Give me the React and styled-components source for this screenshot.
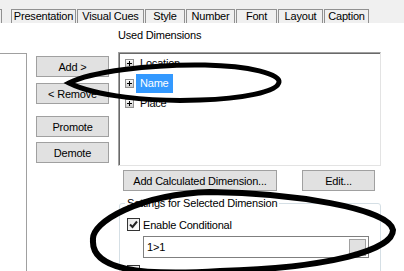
import React from "react";
import styled, { createGlobalStyle } from "styled-components";

const GlobalStyle = createGlobalStyle`
  html, body {
    margin: 0;
    padding: 0;
    background: #fff;
  }
  body {
    width: 404px;
    height: 271px;
    overflow: hidden;
    font-family: "Liberation Sans", Arial, sans-serif;
    font-size: 11px;
    letter-spacing: -0.2px;
    color: #000;
  }
`;

const Page = styled.div`
  position: relative;
  width: 404px;
  height: 271px;
  overflow: hidden;
  background: #fff;
`;

const TabStrip = styled.div`
  display: flex;
  align-items: flex-end;
  gap: 1px;
  box-sizing: border-box;
  height: 23px;
  padding-top: 9px;
  background: #f0f0f0;
`;

const Tab = styled.div`
  box-sizing: border-box;
  flex: none;
  width: ${(p) => p.$w}px;
  height: 14px;
  margin-right: ${(p) => p.$mr || 0}px;
  border: 1px solid #919191;
  border-bottom: none;
  border-left: ${(p) => (p.$cut ? "none" : "1px solid #919191")};
  background: #f0f0f0;
  line-height: 13px;
  text-align: center;
  white-space: nowrap;
`;

const Main = styled.div`
  display: flex;
  align-items: flex-start;
  height: 248px;
`;

const SideList = styled.div`
  box-sizing: border-box;
  flex: none;
  width: 27px;
  height: 230px;
  margin-top: 30px;
  border-top: 1px solid #a0a0a0;
  border-right: 1px solid #a0a0a0;
  background: #fff;
`;

const ButtonColumn = styled.div`
  display: flex;
  flex-direction: column;
  flex: none;
  width: 73px;
  margin: 33px 0 0 9px;
`;

const Button = styled.button`
  box-sizing: border-box;
  flex: none;
  width: ${(p) => p.$w || 73}px;
  height: 21px;
  margin: ${(p) => p.$mt || 0}px 0 0 ${(p) => p.$ml || 0}px;
  padding: 0;
  border: 1px solid #a0a0a0;
  background: #e1e1e1;
  font: 11px "Liberation Sans", Arial, sans-serif;
  letter-spacing: -0.2px;
  color: #000;
  text-align: center;
  white-space: nowrap;
`;

const RightColumn = styled.div`
  display: flex;
  flex-direction: column;
  flex: none;
  width: 263px;
  margin-left: 9px;
`;

const Caption = styled.div`
  margin-top: 6px;
  line-height: 13px;
  white-space: nowrap;
`;

const TreeList = styled.div`
  box-sizing: border-box;
  height: 114px;
  margin-top: 10px;
  border-top: 1px solid #a0a0a0;
  border-left: 1px solid #a0a0a0;
  border-right: 1px solid #e3e3e3;
  border-bottom: 1px solid #e3e3e3;
  box-shadow: inset 1px 1px 0 #696969;
  padding-left: 6px;
  background: #fff;
`;

const TreeRow = styled.div`
  display: flex;
  align-items: center;
  height: 20px;
`;

const TreeLabel = styled.span`
  display: flex;
  align-items: center;
  height: 19px;
  margin-left: 2px;
  padding: 0 4px;
  background: ${(p) => (p.$selected ? "#3399ff" : "transparent")};
  color: ${(p) => (p.$selected ? "#fff" : "#000")};
  white-space: nowrap;
`;

const ButtonRow = styled.div`
  display: flex;
  margin-top: 4px;
`;

const Group = styled.fieldset`
  box-sizing: border-box;
  height: 90px;
  margin: 6px 0 0 1px;
  padding: 8px 0 0 7px;
  border: 1px solid #d5dfe5;
  border-radius: 3px;
`;

const GroupTitle = styled.legend`
  margin-left: -2px;
  padding: 0 2px;
  line-height: 13px;
  white-space: nowrap;
`;

const CheckRow = styled.div`
  display: flex;
  align-items: center;
  gap: 3px;
  height: 13px;
  margin-top: ${(p) => p.$mt || 0}px;
  white-space: nowrap;
`;

const Box = styled.span`
  box-sizing: border-box;
  display: flex;
  align-items: center;
  justify-content: center;
  flex: none;
  width: 13px;
  height: 13px;
  border: 1px solid #333;
  background: linear-gradient(135deg, #e6e6e6, #fff);
`;

const Field = styled.div`
  box-sizing: border-box;
  display: flex;
  align-items: center;
  justify-content: space-between;
  width: 226px;
  height: 22px;
  margin: 5px 0 0 16px;
  padding: 0 2px 0 3px;
  border: 1px solid #7f7f7f;
  background: #fff;
`;

const DotsButton = styled.span`
  box-sizing: border-box;
  display: flex;
  align-items: flex-end;
  justify-content: center;
  width: 17px;
  height: 17px;
  border: 1px solid #a0a0a0;
  background: #e1e1e1;
  line-height: 11px;
  font-size: 10px;
`;

const Overlay = styled.svg`
  position: absolute;
  left: 0;
  top: 0;
  pointer-events: none;
`;

const tabs = [
  ["Presentation", 65],
  ["Visual Cues", 67],
  ["Style", 40],
  ["Number", 49],
  ["Font", 41],
  ["Layout", 45],
  ["Caption", 45],
];

const Expander = () => (
  <svg width="9" height="9" viewBox="0 0 9 9">
    <defs>
      <linearGradient id="exp" x1="0" y1="0" x2="0" y2="1">
        <stop offset="0" stopColor="#ffffff" />
        <stop offset="1" stopColor="#c8c8c8" />
      </linearGradient>
    </defs>
    <rect x="0.5" y="0.5" width="8" height="8" fill="url(#exp)" stroke="#919191" />
    <path d="M2 4.5h5M4.5 2v5" stroke="#000" strokeWidth="1" />
  </svg>
);

const CheckBox = ({ checked }) => (
  <Box>
    {checked && (
      <svg width="9" height="9" viewBox="0 0 9 9">
        <path d="M1 4.5 L3.5 7 L8 1.5" fill="none" stroke="#222" strokeWidth="2" />
      </svg>
    )}
  </Box>
);

export default function App() {
  return (
    <Page>
      <GlobalStyle />
      <TabStrip>
        <Tab $w={2} $mr={8} $cut />
        {tabs.map(([label, w]) => (
          <Tab key={label} $w={w}>
            {label}
          </Tab>
        ))}
      </TabStrip>
      <Main>
        <SideList />
        <ButtonColumn>
          <Button>Add &gt;</Button>
          <Button $mt={6}>&lt; Remove</Button>
          <Button $mt={12}>Promote</Button>
          <Button $mt={5}>Demote</Button>
        </ButtonColumn>
        <RightColumn>
          <Caption>Used Dimensions</Caption>
          <TreeList>
            <TreeRow>
              <Expander />
              <TreeLabel>Location</TreeLabel>
            </TreeRow>
            <TreeRow>
              <Expander />
              <TreeLabel $selected>Name</TreeLabel>
            </TreeRow>
            <TreeRow>
              <Expander />
              <TreeLabel>Place</TreeLabel>
            </TreeRow>
          </TreeList>
          <ButtonRow>
            <Button $w={154} $ml={5}>
              Add Calculated Dimension...
            </Button>
            <Button $ml={25}>Edit...</Button>
          </ButtonRow>
          <Group>
            <GroupTitle>Settings for Selected Dimension</GroupTitle>
            <CheckRow>
              <CheckBox checked />
              Enable Conditional
            </CheckRow>
            <Field>
              <span>1&gt;1</span>
              <DotsButton>...</DotsButton>
            </Field>
            <CheckRow $mt={7}>
              <CheckBox />
            </CheckRow>
          </Group>
        </RightColumn>
      </Main>
      <Overlay width="404" height="271" viewBox="0 0 404 271">
        <path
          d="M69 83 C90 72 150 64 205 65 C250 66 280 74 279 82 C278 92 240 99 200 100 C150 102 95 96 69 83 Z"
          fill="none"
          stroke="#000"
          strokeWidth="5"
        />
        <path
          d="M93 240 C91 222 140 194 210 192 C290 193 390 208 393 230 C393 250 330 268 220 271 C140 276 91 270 93 240 Z"
          fill="none"
          stroke="#000"
          strokeWidth="6"
        />
      </Overlay>
    </Page>
  );
}
